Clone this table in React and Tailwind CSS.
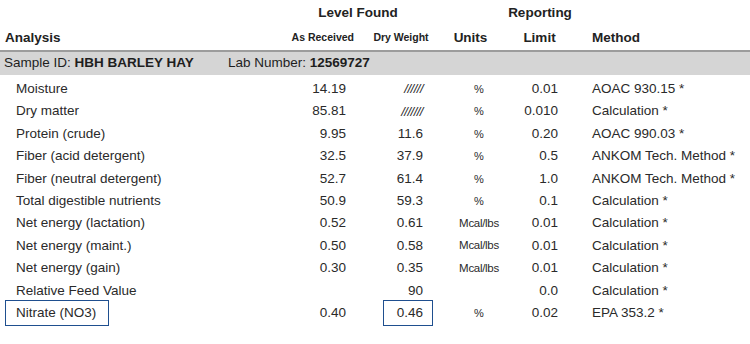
import React from "react";

const rows = [
  ["Moisture", "14.19", "//////", "%", "0.01", "AOAC 930.15 *"],
  ["Dry matter", "85.81", "///////", "%", "0.010", "Calculation *"],
  ["Protein (crude)", "9.95", "11.6", "%", "0.20", "AOAC 990.03 *"],
  ["Fiber (acid detergent)", "32.5", "37.9", "%", "0.5", "ANKOM Tech. Method *"],
  ["Fiber (neutral detergent)", "52.7", "61.4", "%", "1.0", "ANKOM Tech. Method *"],
  ["Total digestible nutrients", "50.9", "59.3", "%", "0.1", "Calculation *"],
  ["Net energy (lactation)", "0.52", "0.61", "Mcal/lbs", "0.01", "Calculation *"],
  ["Net energy (maint.)", "0.50", "0.58", "Mcal/lbs", "0.01", "Calculation *"],
  ["Net energy (gain)", "0.30", "0.35", "Mcal/lbs", "0.01", "Calculation *"],
  ["Relative Feed Value", "", "90", "", "0.0", "Calculation *"],
  ["Nitrate (NO3)", "0.40", "0.46", "%", "0.02", "EPA 353.2 *", true],
];

export default function App() {
  return (
    <div
      className="w-[750px] h-[344px] bg-white text-[#2a2a2a] overflow-hidden"
      style={{ fontFamily: '"Liberation Sans", Arial, sans-serif' }}
    >
      {/* header row 1 */}
      <div className="flex h-[26px] items-center text-[13.5px] font-bold text-[#222]">
        <div className="w-[286px]" />
        <div className="w-[144px] text-center">Level Found</div>
        <div className="w-[70px]" />
        <div className="w-[80px] text-center">Reporting</div>
      </div>
      {/* header row 2 */}
      <div className="flex h-[24px] items-center font-bold text-[#222]">
        <div className="w-[290px] pl-[5px] text-[13.5px]">Analysis</div>
        <div className="w-[64px] text-right text-[10.5px]">As Received</div>
        <div className="w-[92px] text-center text-[10.5px] pl-[2px]">Dry Weight</div>
        <div className="w-[49px] text-center text-[13.5px]">Units</div>
        <div className="w-[89px] text-center text-[13.5px]">Limit</div>
        <div className="pl-[8px] text-[13.5px]">Method</div>
      </div>
      {/* sample bar */}
      <div className="h-[25px] border-t-2 border-[#9c9c9c] bg-[#d5d5d5] flex items-center text-[13.5px] text-[#1e1e1e]">
        <div className="w-[228px] pl-[4px]">
          Sample ID: <span className="font-bold">HBH BARLEY HAY</span>
        </div>
        <div>
          Lab Number: <span className="font-bold">12569727</span>
        </div>
      </div>
      {/* data rows */}
      <div className="pt-[3px] text-[13.5px]">
        {rows.map((r) => (
          <div key={r[0]} className="flex h-[22.4px] items-center">
            <div className="w-[290px] pl-[5px] flex items-center">
              <span
                className={
                  "h-[26px] flex items-center pl-[10px] border-[1.5px] " +
                  (r[6] ? "w-[104px] border-[#1f4f8f]" : "border-transparent")
                }
              >
                {r[0]}
              </span>
            </div>
            <div className="w-[56px] text-right">{r[1]}</div>
            <div className="w-[94px] flex justify-end pr-[7px]">
              <span
                className={
                  "w-[50px] h-[26px] flex items-center justify-end pr-[9px] border-[1.5px] " +
                  (r[6] ? "border-[#1f4f8f]" : "border-transparent") +
                  (r[2].startsWith("/") ? " italic text-[13px] tracking-[-0.5px]" : "")
                }
              >
                {r[2]}
              </span>
            </div>
            <div
              className={
                "w-[78px] text-center " +
                (r[3] === "%" ? "text-[11px]" : "text-[11.5px] tracking-[-0.3px]")
              }
            >
              {r[3]}
            </div>
            <div className="w-[40px] text-right">{r[4]}</div>
            <div className="pl-[34px]">{r[5]}</div>
          </div>
        ))}
      </div>
    </div>
  );
}
